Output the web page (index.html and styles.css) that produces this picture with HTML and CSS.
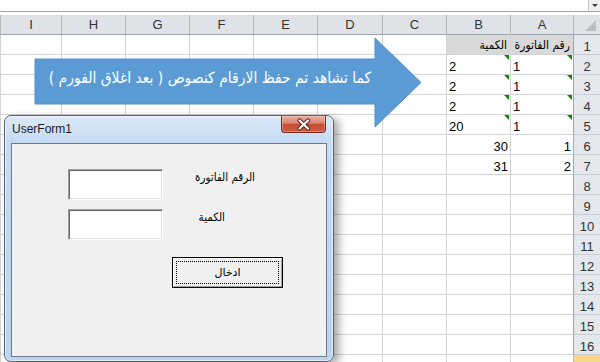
FILE: index.html
```html
<!DOCTYPE html>
<html lang="ar">
<head>
    <meta charset="UTF-8">
    <title>UserForm1</title>
    <link rel="stylesheet" href="styles.css">
</head>
<body>
    <div class="sheet">
        <div class="formula-bar"><span class="fx-toggle"></span></div>
        <div class="spacer"></div>

        <div class="row head">
            <div class="corner"></div><div>A</div><div>B</div><div>C</div><div>D</div><div>E</div><div>F</div><div>G</div><div>H</div><div>I</div>
        </div>
        <div class="row">
            <div class="num">1</div><div class="title">رقم الفاتورة</div><div class="title">الكمية</div><div></div><div></div><div></div><div></div><div></div><div></div><div></div>
        </div>
        <div class="row">
            <div class="num">2</div><div class="txt">1</div><div class="txt">2</div><div></div><div></div><div></div><div></div><div></div><div></div><div></div>
        </div>
        <div class="row">
            <div class="num">3</div><div class="txt">1</div><div class="txt">2</div><div></div><div></div><div></div><div></div><div></div><div></div><div></div>
        </div>
        <div class="row">
            <div class="num">4</div><div class="txt">1</div><div class="txt">2</div><div></div><div></div><div></div><div></div><div></div><div></div><div></div>
        </div>
        <div class="row">
            <div class="num">5</div><div class="txt">1</div><div class="txt">20</div><div></div><div></div><div></div><div></div><div></div><div></div><div></div>
        </div>
        <div class="row">
            <div class="num">6</div><div class="val">1</div><div class="val">30</div><div></div><div></div><div></div><div></div><div></div><div></div><div></div>
        </div>
        <div class="row">
            <div class="num">7</div><div class="val">2</div><div class="val">31</div><div></div><div></div><div></div><div></div><div></div><div></div><div></div>
        </div>
        <div class="row"><div class="num">8</div><div></div><div></div><div></div><div></div><div></div><div></div><div></div><div></div><div></div></div>
        <div class="row"><div class="num">9</div><div></div><div></div><div></div><div></div><div></div><div></div><div></div><div></div><div></div></div>
        <div class="row"><div class="num">10</div><div></div><div></div><div></div><div></div><div></div><div></div><div></div><div></div><div></div></div>
        <div class="row"><div class="num">11</div><div></div><div></div><div></div><div></div><div></div><div></div><div></div><div></div><div></div></div>
        <div class="row"><div class="num">12</div><div></div><div></div><div></div><div></div><div></div><div></div><div></div><div></div><div></div></div>
        <div class="row"><div class="num">13</div><div></div><div></div><div></div><div></div><div></div><div></div><div></div><div></div><div></div></div>
        <div class="row"><div class="num">14</div><div></div><div></div><div></div><div></div><div></div><div></div><div></div><div></div><div></div></div>
        <div class="row"><div class="num">15</div><div></div><div></div><div></div><div></div><div></div><div></div><div></div><div></div><div></div></div>
        <div class="row"><div class="num">16</div><div></div><div></div><div></div><div></div><div></div><div></div><div></div><div></div><div></div></div>
        <div class="row last"><div class="num sel"></div><div></div><div></div><div></div><div></div><div></div><div></div><div></div><div></div><div></div></div>
    </div>

    <!-- السهم التوضيحي -->
    <svg class="callout" width="430" height="135" viewBox="0 0 430 135">
        <polygon points="35,59 375,59 375,38 421,82.5 375,127 375,104 35,104" fill="#5b9bd5" stroke="#5290cb" stroke-width="1"/>
    </svg>
    <div class="callout-text">كما تشاهد تم حفظ الارقام كنصوص ( بعد اغلاق الفورم )</div>

    <div class="userform">
        <div class="form-title">UserForm1</div>
        <div class="close-btn">
            <svg width="45" height="17" viewBox="0 0 45 17">
                <path d="M18.5 4.5 L27 12.5 M27 4.5 L18.5 12.5" stroke="#5a2118" stroke-width="4.2" stroke-linecap="round"/>
                <path d="M18.5 4.5 L27 12.5 M27 4.5 L18.5 12.5" stroke="#ffffff" stroke-width="2.2" stroke-linecap="round"/>
            </svg>
        </div>
        <div class="client">
            <div class="field">
                <div class="textbox"></div>
                <div class="label label-invoice">الرقم الفاتورة</div>
            </div>
            <div class="field">
                <div class="textbox"></div>
                <div class="label label-qty">الكمية</div>
            </div>
            <div class="cmd-btn">ادخال</div>
        </div>
    </div>
</body>
</html>
```

FILE: styles.css
```css
body {
    margin: 0;
    width: 600px;
    height: 362px;
    overflow: hidden;
    position: relative;
    background: #fff;
    font-family: 'Liberation Sans', 'DejaVu Sans', sans-serif;
}

/* شريط الصيغة */
.formula-bar {
    height: 11px;
    border-bottom: 1px solid #a5a5a5;
    display: flex;
    justify-content: flex-end;
}

.fx-toggle {
    width: 11px;
    height: 11px;
    background: #f0f0f0;
    border-left: 1px solid #c4c4c4;
    position: relative;
}

.fx-toggle::after {
    content: '';
    position: absolute;
    left: 3px;
    top: 4px;
    border-left: 3px solid transparent;
    border-right: 3px solid transparent;
    border-top: 3px solid #3c3c3c;
}

.spacer {
    height: 3px;
}

/* الجدول */
.row {
    display: grid;
    grid-template-columns: 27px 63px 64px 64px 65px 64px 64px 64px 64px 61px;
    direction: rtl;
    height: 20px;
}

.row.last {
    height: 7px;
    overflow: hidden;
}

.row > div {
    box-sizing: border-box;
    height: 20px;
    border-left: 1px solid #d4d4d4;
    border-bottom: 1px solid #d4d4d4;
    font-size: 13px;
    line-height: 19px;
    padding: 2px 2px 0;
    overflow: hidden;
    white-space: nowrap;
    position: relative;
    color: #000;
}

.head > div {
    background: #dfe3e8;
    border-left-color: #b2b8bf;
    border-bottom-color: #9ea5ad;
    text-align: center;
    padding: 0;
    color: #333;
}

.head > .corner::after {
    content: '';
    position: absolute;
    right: 4px;
    bottom: 3px;
    border-left: 11px solid transparent;
    border-bottom: 11px solid #b9bfc7;
}

.row > .num {
    background: #e4e8ed;
    border-left-color: #9ea7b1;
    border-bottom-color: #c9ced5;
    text-align: center;
    padding: 2px 0 0;
    color: #333;
}

.row > .num.sel {
    background: #f9d68a;
    border-left-color: #f0b84e;
}

.row > .title {
    background: #d9d9d9;
    font-family: 'DejaVu Sans Condensed', 'DejaVu Sans', sans-serif;
    font-stretch: condensed;
    font-size: 12px;
    padding: 1px 3px 0 0;
}

.row > .txt {
    text-align: left;
}

/* مثلث "رقم مخزن كنص" */
.row > .txt::after {
    content: '';
    position: absolute;
    top: 0;
    right: 1px;
    border-left: 5px solid transparent;
    border-top: 5px solid #008a00;
}

.row > .val {
    text-align: right;
}

/* السهم */
.callout {
    position: absolute;
    left: 0;
    top: 0;
}

.callout-text {
    position: absolute;
    left: 35px;
    top: 59px;
    width: 350px;
    height: 38px;
    display: flex;
    align-items: center;
    justify-content: center;
    direction: rtl;
    color: #fff;
    font-family: 'DejaVu Sans Condensed', 'DejaVu Sans', sans-serif;
    font-stretch: condensed;
    font-size: 15.5px;
    white-space: nowrap;
}

/* نافذة الفورم */
.userform {
    position: absolute;
    left: 4px;
    top: 115px;
    width: 330px;
    height: 247px;
    box-sizing: border-box;
    border: 1px solid #59636e;
    border-radius: 7px;
    background: linear-gradient(#dbe9f8, #c5dbf3 26px, #bad3ef);
    box-shadow: inset 0 0 0 1px rgba(255, 255, 255, 0.55), 5px 3px 8px rgba(0, 0, 0, 0.35);
}

.form-title {
    height: 26px;
    padding-left: 7px;
    line-height: 26px;
    font-size: 12px;
    color: #1b1b1b;
}

.close-btn {
    position: absolute;
    left: 276px;
    top: 0;
    width: 45px;
    height: 17px;
    box-sizing: border-box;
    border: 1px solid #7b2a1c;
    border-top: none;
    border-radius: 0 0 4px 4px;
    background: linear-gradient(#e9b3a7, #d9806d 45%, #c44c35 52%, #c95e43);
    box-shadow: inset 0 0 0 1px rgba(255, 220, 210, 0.35);
}

.close-btn svg {
    display: block;
    margin-left: -1px;
}

.client {
    position: absolute;
    left: 6px;
    top: 27px;
    width: 316px;
    height: 214px;
    box-sizing: border-box;
    border: 1px solid #6d7a88;
    background: #f0f0f0;
    padding: 25px 0 0 56px;
}

.field {
    display: flex;
    height: 40px;
}

.textbox {
    width: 95px;
    height: 31px;
    box-sizing: border-box;
    background: #fff;
    border-top: 1px solid #a0a0a0;
    border-left: 1px solid #a0a0a0;
    border-bottom: 1px solid #fff;
    border-right: 1px solid #fff;
    box-shadow: inset 1px 1px 0 #696969, inset -1px -1px 0 #e3e3e3;
}

.label {
    direction: rtl;
    text-align: right;
    font-family: 'DejaVu Sans Condensed', 'DejaVu Sans', sans-serif;
    font-stretch: condensed;
    font-size: 11.5px;
    line-height: 14px;
    margin-top: 1px;
    color: #000;
}

.label-invoice {
    width: 92px;
}

.label-qty {
    width: 62px;
}

.cmd-btn {
    position: relative;
    width: 111px;
    height: 31px;
    margin: 8px 0 0 104px;
    box-sizing: border-box;
    border: 1px solid #000;
    background: #f0f0f0;
    box-shadow: inset 1px 1px 0 #fff, inset -1px -1px 0 #a0a0a0;
    text-align: center;
    line-height: 29px;
    font-family: 'DejaVu Sans', sans-serif;
    font-size: 11px;
    direction: rtl;
}

.cmd-btn::after {
    content: '';
    position: absolute;
    left: 3px;
    top: 3px;
    right: 3px;
    bottom: 3px;
    border: 1px dotted #000;
}
```
